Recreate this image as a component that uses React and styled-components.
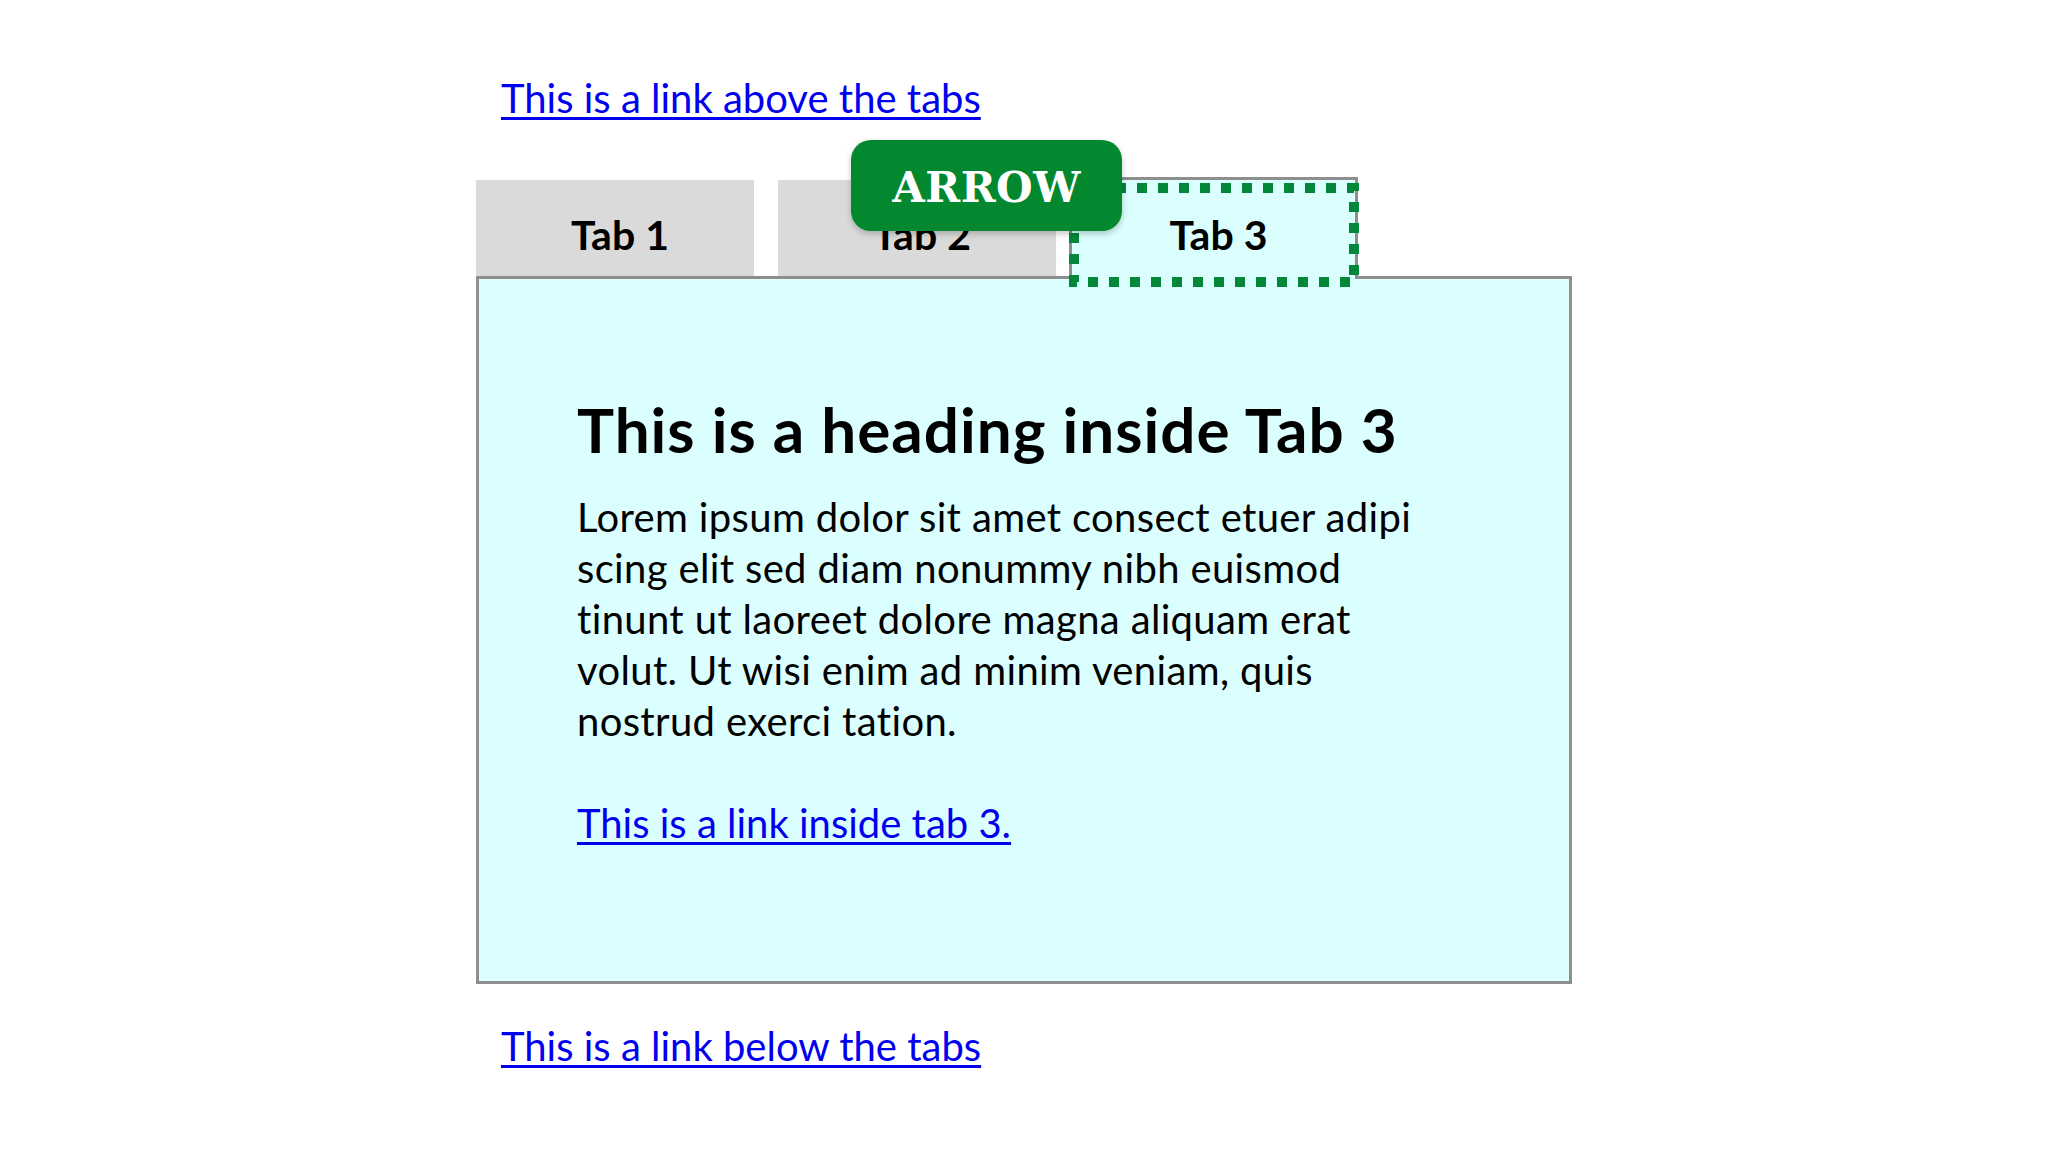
import React from "react";
import styled, { createGlobalStyle } from "styled-components";

const GlobalStyle = createGlobalStyle`
  html, body {
    margin: 0;
    padding: 0;
    background: #ffffff;
  }
  body {
    font-family: Lato, "Open Sans", "Liberation Sans", sans-serif;
    color: #000;
  }
`;

const Page = styled.div`
  width: 1096px;
  margin: 0 auto;
  padding-top: 74px;
`;

const LinkRow = styled.div`
  padding-left: ${(p) => p.$inset ?? 25}px;
  margin-top: ${(p) => p.$top ?? 0}px;
  font-size: 40px;
  line-height: 48px;
`;

const TextLink = styled.a`
  color: #0000ee;
  text-decoration: underline;
  text-decoration-thickness: 3px;
  text-underline-offset: 4px;
`;

const TabList = styled.div`
  display: flex;
  align-items: flex-start;
  gap: 24px;
  margin-top: 55px;
  height: 99px;
`;

const Tab = styled.div`
  position: relative;
  box-sizing: border-box;
  width: ${(p) => p.$width || 278}px;
  display: flex;
  justify-content: center;
  padding-left: 10px;
  font-weight: 700;
  font-size: 41px;
  line-height: 48px;
  ${(p) =>
    p.$active
      ? `
    z-index: 2;
    height: 102px;
    margin-left: -11px;
    padding-top: 31px;
    background: #dbfefe;
    border: 3px solid #8e8e8e;
    border-bottom: none;
  `
      : `
    margin-top: 3px;
    height: 96px;
    padding-top: 31px;
    background: #dadada;
  `}
`;

const FocusRing = styled.svg`
  position: absolute;
  left: -3px;
  top: 3px;
  width: calc(100% + 7px);
  height: calc(100% + 5px);
  pointer-events: none;
  overflow: visible;
`;

const Badge = styled.div`
  position: absolute;
  z-index: 3;
  left: -221px;
  top: -40px;
  width: 271px;
  height: 91px;
  box-sizing: border-box;
  border-radius: 20px;
  background: #03882f;
  box-shadow: 0 3px 6px rgba(0, 0, 0, 0.22);
  display: flex;
  align-items: center;
  justify-content: center;
  padding-top: 4px;
  color: #ffffff;
  font-family: "DejaVu Serif", "Liberation Serif", serif;
  font-weight: 700;
  font-size: 42px;
  letter-spacing: 0.5px;
`;

const Panel = styled.section`
  box-sizing: border-box;
  height: 708px;
  border: 3px solid #8e8e8e;
  background: #dbfefe;
  padding: 114px 98px 0 98px;
`;

const Heading = styled.h2`
  margin: 0;
  font-size: 62px;
  line-height: 72px;
  font-weight: 700;
  letter-spacing: 1px;
`;

const Body = styled.p`
  margin: 27px 0 0;
  font-size: 40px;
  line-height: 51px;
  font-weight: 400;
  letter-spacing: 0.35px;
`;

function Ring() {
  return (
    <FocusRing>
      <rect
        x="5"
        y="5"
        style={{ width: "calc(100% - 10px)", height: "calc(100% - 10px)" }}
        fill="none"
        stroke="#03873a"
        strokeWidth="10"
        strokeDasharray="10 11"
      />
    </FocusRing>
  );
}

export default function App() {
  return (
    <>
      <GlobalStyle />
      <Page>
        <LinkRow>
          <TextLink href="#">This is a link above the tabs</TextLink>
        </LinkRow>

        <TabList>
          <Tab>Tab 1</Tab>
          <Tab>Tab 2</Tab>
          <Tab $active $width={289}>
            <Badge>ARROW</Badge>
            Tab 3
            <Ring />
          </Tab>
        </TabList>

        <Panel>
          <Heading>This is a heading inside Tab 3</Heading>
          <Body>
            Lorem ipsum dolor sit amet consect etuer adipi
            <br />
            scing elit sed diam nonummy nibh euismod
            <br />
            tinunt ut laoreet dolore magna aliquam erat
            <br />
            volut. Ut wisi enim ad minim veniam, quis
            <br />
            nostrud exerci tation.
          </Body>
          <LinkRow $inset={0} $top={52}>
            <TextLink href="#">This is a link inside tab 3.</TextLink>
          </LinkRow>
        </Panel>

        <LinkRow $top={38}>
          <TextLink href="#">This is a link below the tabs</TextLink>
        </LinkRow>
      </Page>
    </>
  );
}
